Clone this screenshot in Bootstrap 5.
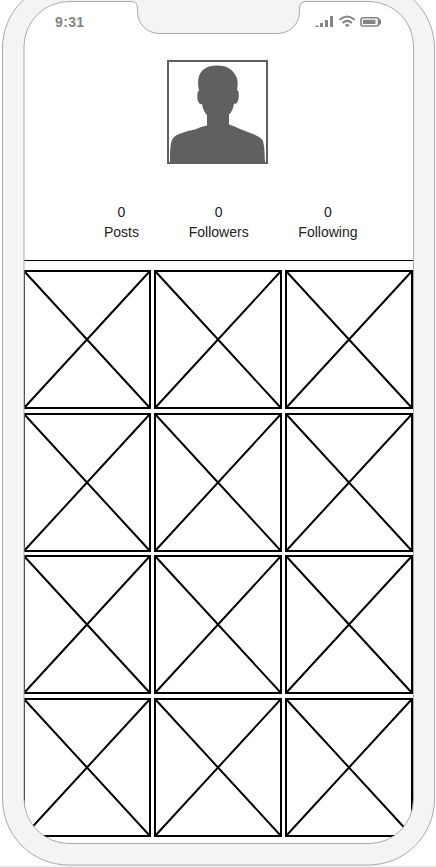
<!DOCTYPE html>
<html lang="en">
<head>
<meta charset="utf-8">
<meta name="viewport" content="width=device-width, initial-scale=1">
<title>Profile</title>
<link href="https://cdn.jsdelivr.net/npm/bootstrap@5.3.0/dist/css/bootstrap.min.css" rel="stylesheet">
<style>
body{font-family:"Liberation Sans",Arial,sans-serif;background:#fff;overflow:hidden}
.phone{width:436px;height:867px}
.screen{width:389px;margin-left:24px}
.status{height:60px;padding:14px 31px 0 31px;color:#848484}
.clock{font-size:14px;line-height:16px;font-weight:700;letter-spacing:.35px}
.portrait{width:101px;height:104px;margin-left:143px}
.stats{font-size:14px;line-height:20px;color:#222;padding:38px 55.5px 0 80px;height:96px}
.rule{height:1px;background:#000;margin-bottom:9px}
.tiles{display:grid;grid-template-columns:128px 128px 128px;column-gap:3px;row-gap:3.7px;margin-left:-1px}
.tiles svg{width:100%;height:139px}
.frame{left:0;top:0}
</style>
<script src="https://cdn.jsdelivr.net/npm/bootstrap@5.3.0/dist/js/bootstrap.bundle.min.js"></script>
</head>
<body>
<div class="phone position-relative overflow-hidden">
  <main class="screen">
    <div class="status"></div>
    <svg class="portrait d-block" viewBox="0 0 101 104" role="img" aria-label="Profile picture">
      <path d="M1 1H100V103H1Z" fill="#fff" stroke="#606060" stroke-width="2"/>
      <path fill="#606060" d="M3 103C3 94 3 85 5 80Q7 75 15 73Q22 70 28 69.500Q34 66.500 40 65.500V55Q36 51 35 44Q32 45 30.700 40Q29.500 32 32 30.500Q30.500 25 31.500 18C33 10 40 5.500 50 5.500C61 5.500 66 10 69.500 17Q71.500 21 70 30Q72.500 31 71.500 39Q70 45 67 43.500Q66 51 62 54.500V64.500Q68 66 73 69L86 74Q94 77 96 81C98 88 97.500 96 98 103Z"/>
    </svg>
    <div class="stats d-flex justify-content-between text-center">
      <div>0<br>Posts</div><div class="ms-3">0<br>Followers</div><div class="ms-3">0<br>Following</div>
    </div>
    <div class="rule"></div>
    <div class="tiles" id="tiles"></div>
  </main>
  <svg class="frame position-absolute" width="436" height="867" viewBox="0 0 436 867">
    <path fill="#f2f2f2" d="M0 865H436V867H0Z"/>
    <path fill="#f4f4f4" stroke="#aaa" fill-rule="evenodd" d="M68.500 -18H368.500A66 66 0 0 1 434.500 48V799A66 66 0 0 1 368.500 865H68.500A66 66 0 0 1 2.500 799V48A66 66 0 0 1 68.500 -18ZM69 1.500H131Q137.500 1.500 137.500 8V12A22 21.500 0 0 0 159.500 33.500H277.500A22 21.500 0 0 0 299.500 12V8Q299.500 1.500 306 1.500H369A44.500 44.500 0 0 1 413.500 46V799A44.500 44.500 0 0 1 369 843.500H69A45 45 0 0 1 24 799V46A45 45 0 0 1 69 1.500Z"/>
  </svg>
  <header class="status screen frame position-absolute d-flex justify-content-between">
    <span class="clock">9:31</span>
    <svg width="67" height="16" viewBox="315 14 67 16" fill="#848484">
      <path d="M315.500 25.500h3v1.500h-3zM320 23h3v4h-3zM325 20h3v7h-3zM330 16h3v11h-3z"/>
      <g fill="none" stroke="#848484" stroke-width="2"><path d="M339.500 19.800Q347.200 13.200 354.800 19.800M342.500 23Q347.200 18.800 351.800 23"/></g>
      <path d="M344.800 25Q347.200 23.200 349.600 25L347.200 27.300Z"/>
      <rect x="361" y="17.700" width="17.500" height="8.300" rx="2" fill="#fff" stroke="#848484" stroke-width="1.600"/>
      <path d="M363 19.800h12.500v4.200H363zM379 18.500q2.300 1 2.300 3.400t-2.300 3.400z"/>
    </svg>
  </header>
</div>
<script>
const tile = '<svg class="d-block" viewBox="0 0 128 139" preserveAspectRatio="none" aria-hidden="true"><path d="M1 1H127V138H1ZL127 138M127 1L1 138" fill="none" stroke="#000" stroke-width="2"/></svg>';
document.getElementById('tiles').innerHTML = tile.repeat(12);
</script>
</body>
</html>
